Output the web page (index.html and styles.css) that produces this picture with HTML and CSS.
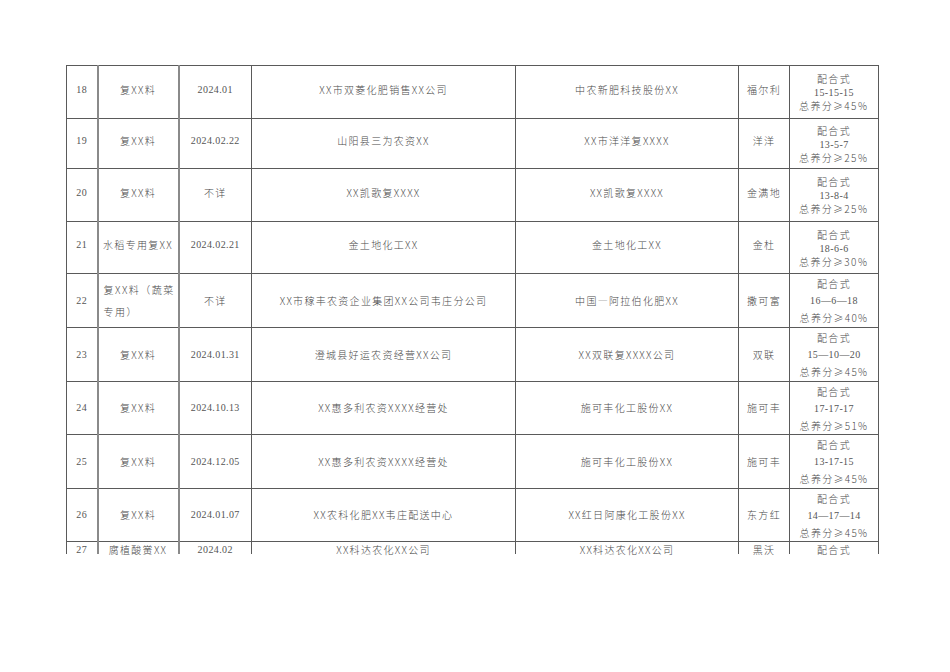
FILE: index.html
```html
<!DOCTYPE html>
<html lang="zh">
<head>
<meta charset="utf-8">
<link rel="stylesheet" href="styles.css">
</head>
<body>
<div class="page">
<table class="grid">
<colgroup>
<col class="c-no"><col class="c-name"><col class="c-date"><col class="c-seller"><col class="c-maker"><col class="c-brand"><col class="c-spec">
</colgroup>
<tbody>
<tr class="r-a">
<td class="num">18</td><td>复XX料</td><td class="num">2024.01</td><td>XX市双菱化肥销售XX公司</td><td>中农新肥科技股份XX</td><td>福尔利</td>
<td class="spec tight"><div class="s1">配合式</div><div class="num">15-15-15</div><div>总养分≥45％</div></td>
</tr>
<tr class="r-b">
<td class="num">19</td><td>复XX料</td><td class="num">2024.02.22</td><td>山阳县三为农资XX</td><td>XX市洋洋复XXXX</td><td>洋洋</td>
<td class="spec tight"><div class="s1">配合式</div><div class="num">13-5-7</div><div>总养分≥25％</div></td>
</tr>
<tr class="r-a">
<td class="num">20</td><td>复XX料</td><td>不详</td><td>XX凯歌复XXXX</td><td>XX凯歌复XXXX</td><td>金满地</td>
<td class="spec tight"><div class="s1">配合式</div><div class="num">13-8-4</div><div>总养分≥25％</div></td>
</tr>
<tr class="r-e">
<td class="num">21</td><td>水稻专用复XX</td><td class="num">2024.02.21</td><td>金土地化工XX</td><td>金土地化工XX</td><td>金杜</td>
<td class="spec tight"><div class="s1">配合式</div><div class="num">18-6-6</div><div>总养分≥30％</div></td>
</tr>
<tr class="r-c">
<td class="num">22</td><td class="wrap">复XX料（蔬菜专用）</td><td>不详</td><td>XX市稼丰农资企业集团XX公司韦庄分公司</td><td>中国—阿拉伯化肥XX</td><td>撒可富</td>
<td class="spec loose"><div>配合式</div><div class="num">16—6—18</div><div>总养分≥40%</div></td>
</tr>
<tr class="r-c">
<td class="num">23</td><td>复XX料</td><td class="num">2024.01.31</td><td>澄城县好运农资经营XX公司</td><td>XX双联复XXXX公司</td><td>双联</td>
<td class="spec loose"><div>配合式</div><div class="num">15—10—20</div><div>总养分≥45%</div></td>
</tr>
<tr class="r-d">
<td class="num">24</td><td>复XX料</td><td class="num">2024.10.13</td><td>XX惠多利农资XXXX经营处</td><td>施可丰化工股份XX</td><td>施可丰</td>
<td class="spec loose"><div>配合式</div><div class="num">17-17-17</div><div>总养分≥51%</div></td>
</tr>
<tr class="r-c">
<td class="num">25</td><td>复XX料</td><td class="num">2024.12.05</td><td>XX惠多利农资XXXX经营处</td><td>施可丰化工股份XX</td><td>施可丰</td>
<td class="spec loose"><div>配合式</div><div class="num">13-17-15</div><div>总养分≥45%</div></td>
</tr>
<tr class="r-d">
<td class="num">26</td><td>复XX料</td><td class="num">2024.01.07</td><td>XX农科化肥XX韦庄配送中心</td><td>XX红日阿康化工股份XX</td><td>东方红</td>
<td class="spec loose"><div>配合式</div><div class="num">14—17—14</div><div>总养分≥45%</div></td>
</tr>
<tr class="r-last">
<td class="num">27</td><td>腐植酸黉XX</td><td class="num">2024.02</td><td>XX科达农化XX公司</td><td>XX科达农化XX公司</td><td>黑沃</td><td>配合式</td>
</tr>
</tbody>
</table>
</div>
</body>
</html>
```
FILE: styles.css
```css
html, body {
  margin: 0;
  padding: 0;
  background: #ffffff;
}

.page {
  width: 950px;
  height: 672px;
  padding: 65px 0 0 66px;
  box-sizing: border-box;
  overflow: hidden;
}

.grid {
  border-collapse: collapse;
  table-layout: fixed;
  width: 812px;
  font-family: "Noto Sans CJK SC", "Liberation Serif", sans-serif;
  font-size: 10px;
  font-weight: 300;
  letter-spacing: 1.3px;
  color: #4a4a4a;
}

.c-no { width: 31px; }
.c-name { width: 81px; }
.c-date { width: 73px; }
.c-seller { width: 264px; }
.c-maker { width: 223px; }
.c-brand { width: 51px; }
.c-spec { width: 89px; }

.grid td {
  border: 1px solid #5a5a5a;
  text-align: center;
  vertical-align: middle;
  padding: 0 2px;
  line-height: 14px;
  white-space: nowrap;
  overflow: hidden;
}

.grid .num {
  font-family: "Liberation Serif", serif;
  font-weight: 400;
  letter-spacing: 0.4px;
  color: #555555;
}

.grid td:first-child,
.grid td:nth-child(2) {
  border-right-color: #8a8a8a;
  border-right-width: 2px;
}

.r-a td { height: 47px; padding-bottom: 5px; }
.r-b td { height: 44px; padding-bottom: 5px; }
.r-e td { height: 46px; padding-bottom: 5px; }
.r-c td { height: 53px; }
.r-d td { height: 52px; }

.r-a td.spec { padding-bottom: 0; height: 52px; }
.r-b td.spec { padding-bottom: 0; height: 49px; }
.r-e td.spec { padding-bottom: 0; height: 51px; }

.r-last td {
  height: 8px;
  line-height: 8px;
  vertical-align: top;
  border-bottom: none;
  padding-top: 4px;
  padding-bottom: 0;
  overflow: visible;
}

.grid td.wrap {
  white-space: normal;
  word-break: break-all;
  text-align: left;
  line-height: 22px;
  padding: 0 2px 0 5px;
  letter-spacing: 1.5px;
}

.spec.tight div { line-height: 13px; }
.spec.tight .s1 { margin-bottom: 1px; }
.spec.loose div { line-height: 17px; }
```
